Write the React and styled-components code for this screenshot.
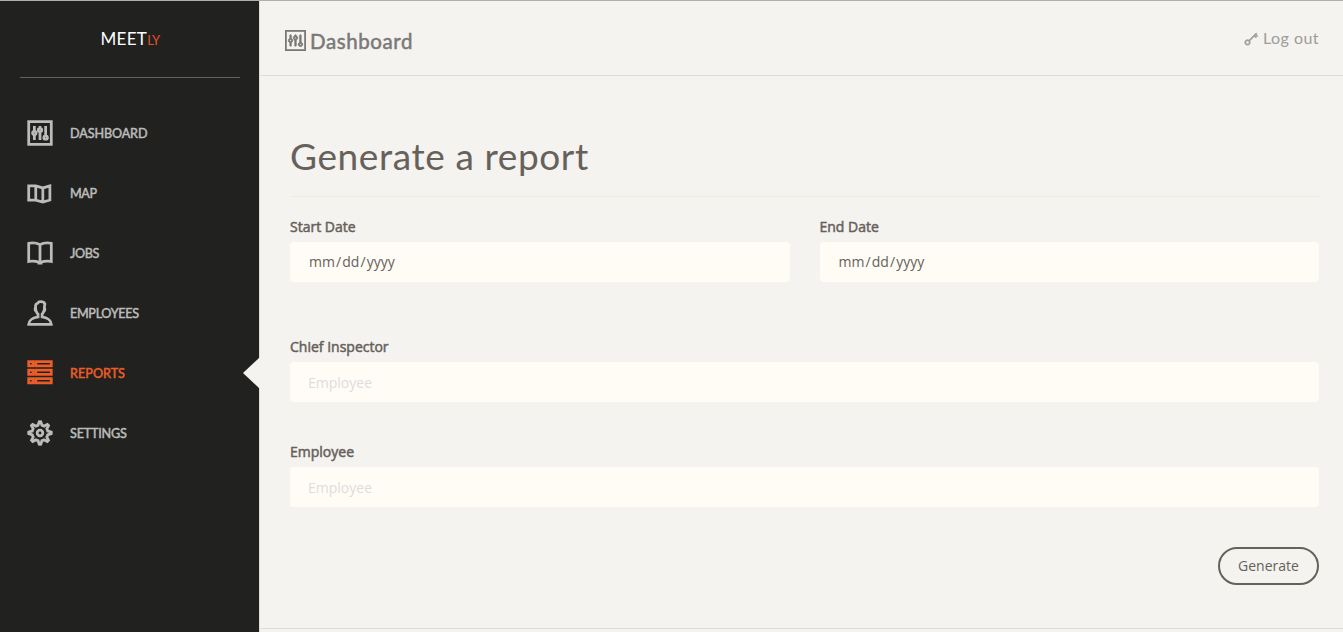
import React from "react";
import styled, { createGlobalStyle, css } from "styled-components";
import {
  TfiPanel,
  TfiMap,
  TfiBook,
  TfiUser,
  TfiViewListAlt,
  TfiSettings,
  TfiKey,
} from "react-icons/tfi";

const Global = createGlobalStyle`
  *, *::before, *::after { box-sizing: border-box; }
  body {
    margin: 0;
    overflow: hidden;
    background: #f4f3ef;
    color: #66615b;
    font-family: "Open Sans", sans-serif;
    font-size: 14px;
  }
`;

const heading = css`
  font-family: Lato, sans-serif;
`;

const Page = styled.div`
  display: flex;
  height: 632px;
  border-top: 1px solid #b0aeae;
`;

const Sidebar = styled.aside`
  flex: none;
  width: 260px;
  background: #212120;
  border-right: 1px solid #dddddd;
`;

const Logo = styled.div`
  ${heading}
  display: flex;
  justify-content: center;
  align-items: baseline;
  margin: 0 19px 0 20px;
  height: 77px;
  padding: 27px 0 0;
  border-bottom: 1px solid #66615b;
  color: #ffffff;
  font-size: 17px;
  line-height: 22px;
  letter-spacing: 0.3px;
`;

const LogoAccent = styled.span`
  color: #e3502b;
  font-size: 13px;
  letter-spacing: -0.6px;
`;

const Nav = styled.nav`
  display: flex;
  flex-direction: column;
  gap: 12px;
  padding-top: 31px;
`;

const NavItem = styled.a`
  ${heading}
  position: relative;
  display: flex;
  align-items: center;
  gap: 18px;
  height: 48px;
  padding-left: 28px;
  color: ${(p) => (p.$active ? "#eb5e28" : "#bcbcba")};
  font-size: 12.6px;
  line-height: 30px;
  -webkit-text-stroke: 0.5px currentColor;

  svg {
    width: 24px;
    height: 24px;
    stroke: currentColor;
    stroke-width: 0.95px;
    overflow: visible;
  }

  ${(p) =>
    p.$active &&
    css`
      &::after {
        content: "";
        position: absolute;
        right: -1px;
        top: 8px;
        border: 16px solid transparent;
        border-left-width: 0;
        border-right: 17px solid #f4f3ef;
      }
    `}
`;

const NavText = styled.span`
  padding-top: 2px;
  letter-spacing: ${(p) => p.$spacing}px;
`;

const Main = styled.main`
  flex: 1;
  display: flex;
  flex-direction: column;
`;

const TopBar = styled.header`
  ${heading}
  display: flex;
  justify-content: space-between;
  height: 75px;
  padding: 0 24px 0 25px;
  border-bottom: 1px solid #dddddd;
`;

const Brand = styled.div`
  display: flex;
  align-items: center;
  gap: 4px;
  height: 80px;
  color: #7a7977;
  font-size: 20.5px;
  letter-spacing: 0.6px;
  -webkit-text-stroke: 0.5px currentColor;

  svg {
    width: 21px;
    height: 21px;
    margin-bottom: 2px;
    stroke: currentColor;
    stroke-width: 0.8px;
  }
`;

const Logout = styled.a`
  display: flex;
  align-items: center;
  gap: 4px;
  height: 73px;
  color: #9e9c98;
  font-size: 16px;
  letter-spacing: 0.45px;

  svg {
    width: 15px;
    height: 15px;
    margin-top: 1px;
    stroke: currentColor;
    stroke-width: 1.1px;
    overflow: visible;
  }
`;

const Content = styled.form`
  flex: none;
  height: 553px;
  padding: 55px 24px 0 30px;
  border-bottom: 1px solid #dddddd;
`;

const Title = styled.h2`
  ${heading}
  height: 66px;
  margin: 0 0 20px;
  padding-top: 3px;
  border-bottom: 1px solid #f1eae0;
  font-size: 37px;
  font-weight: 400;
  line-height: 44px;
  letter-spacing: 0.6px;
`;

const Row = styled.div`
  display: flex;
  gap: 30px;
  margin-bottom: ${(p) => p.$gap}px;
`;

const Field = styled.div`
  flex: 1;
`;

const Label = styled.label`
  display: block;
  height: 25px;
  font-size: 14px;
  line-height: 20px;
  -webkit-text-stroke: 0.5px currentColor;
`;

const Control = styled.div`
  height: 40px;
  padding: 0 18px;
  border-radius: 4px;
  background: #fffcf5;
  color: ${(p) => (p.$placeholder ? "#dddddd" : "#66615b")};
  font-size: 14px;
  line-height: ${(p) => (p.$placeholder ? 42 : 40)}px;
`;

const DateText = styled.span`
  padding-left: 1px;
`;

const Slash = styled.span`
  margin: 0 1.1px;
`;

const Actions = styled.div`
  display: flex;
  justify-content: flex-end;
`;

const Button = styled.button`
  width: 101px;
  height: 38px;
  padding: 0;
  border: 2px solid #66615b;
  border-radius: 20px;
  background: transparent;
  color: #66615b;
  font: 14px/32px "Open Sans", sans-serif;
`;

const items = [
  { label: "DASHBOARD", Icon: TfiPanel, spacing: -0.1 },
  { label: "MAP", Icon: TfiMap, spacing: -0.4 },
  { label: "JOBS", Icon: TfiBook, spacing: -0.35 },
  { label: "EMPLOYEES", Icon: TfiUser, spacing: -0.3 },
  { label: "REPORTS", Icon: TfiViewListAlt, spacing: 0.05, active: true },
  { label: "SETTINGS", Icon: TfiSettings, spacing: -0.2 },
];

function DateField({ label }) {
  return (
    <Field>
      <Label>{label}</Label>
      <Control>
        <DateText>
          mm<Slash>/</Slash>dd<Slash>/</Slash>yyyy
        </DateText>
      </Control>
    </Field>
  );
}

export default function App() {
  return (
    <>
      <Global />
      <Page>
        <Sidebar>
          <Logo>
            MEET<LogoAccent>LY</LogoAccent>
          </Logo>
          <Nav>
            {items.map(({ label, Icon, spacing, active }) => (
              <NavItem key={label} $active={active}>
                <Icon />
                <NavText $spacing={spacing}>{label}</NavText>
              </NavItem>
            ))}
          </Nav>
        </Sidebar>
        <Main>
          <TopBar>
            <Brand>
              <TfiPanel />
              <span>Dashboard</span>
            </Brand>
            <Logout>
              <TfiKey />
              <span>Log out</span>
            </Logout>
          </TopBar>
          <Content>
            <Title>Generate a report</Title>
            <Row $gap={55}>
              <DateField label="Start Date" />
              <DateField label="End Date" />
            </Row>
            <Row $gap={40}>
              <Field>
                <Label>Chief Inspector</Label>
                <Control $placeholder>Employee</Control>
              </Field>
            </Row>
            <Row $gap={40}>
              <Field>
                <Label>Employee</Label>
                <Control $placeholder>Employee</Control>
              </Field>
            </Row>
            <Actions>
              <Button type="button">Generate</Button>
            </Actions>
          </Content>
        </Main>
      </Page>
    </>
  );
}
